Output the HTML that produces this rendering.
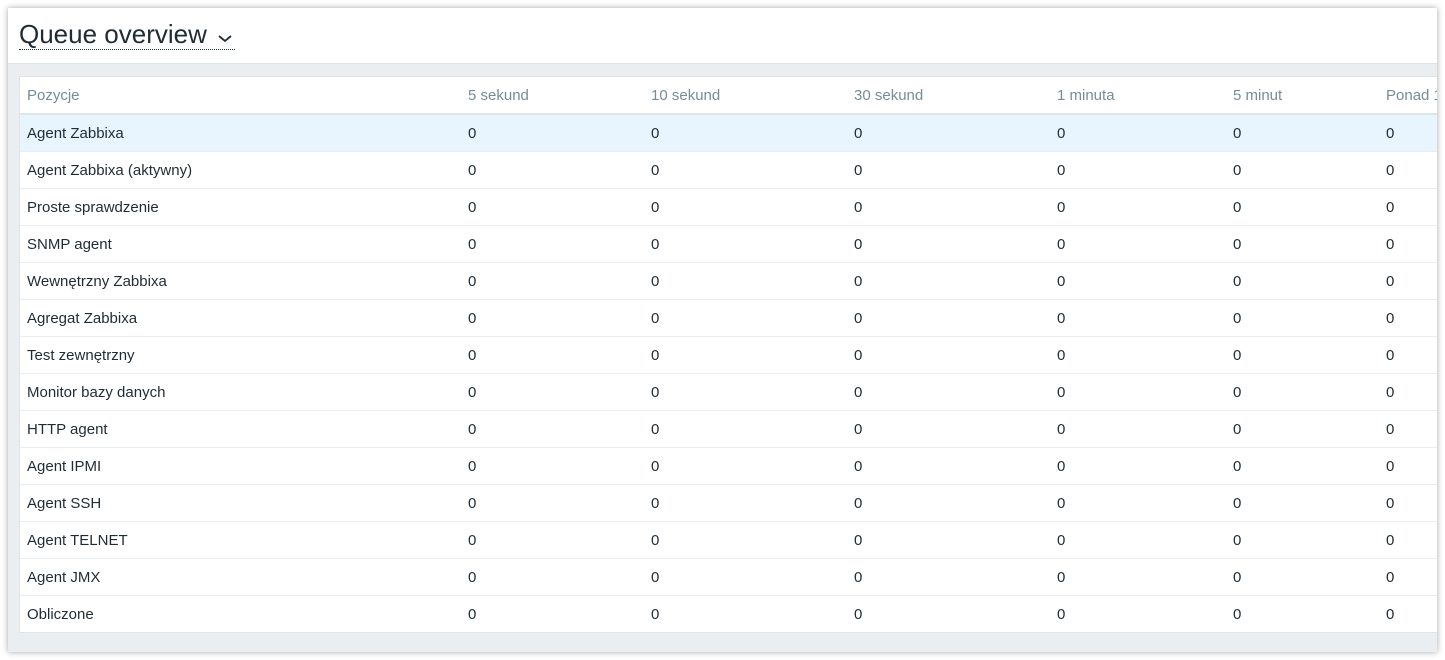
<!DOCTYPE html>
<html><head><style>
body{margin:0;width:1445px;height:660px;background:#fff;overflow:hidden;font-family:"Liberation Sans",Arial,sans-serif;position:relative}
.win{position:absolute;left:8px;top:8px;width:1429px;height:644px;background:#ebeef0;box-shadow:0 0 6px rgba(0,0,0,.35);overflow:hidden}
.hdr{position:absolute;left:0;top:0;width:1429px;height:55px;background:#fff;border-bottom:1px solid #dfe4e7}
.title{position:absolute;left:11px;top:12px;font-size:26px;color:#1f2c33;border-bottom:1px dotted #1f2c33;line-height:29px;padding-right:2px;white-space:nowrap}
.tbl{position:absolute;left:11px;top:68px;width:1440px;background:#fff;border:1px solid #dfe4e7;border-right:none}
.row{position:relative;height:36px;border-bottom:1px solid #ebeef0;font-size:15px;color:#1f2c33;white-space:nowrap}
.row span{position:absolute;top:10px}
.head{height:36px;border-bottom:2px solid #dfe4e7;color:#768d99}
.hl{background:#e8f5ff}
.row:last-child{border-bottom:none}
</style></head><body>
<div class="win">
<div class="hdr"><div class="title">Queue overview <svg width="16" height="10" viewBox="0 0 16 10" style="margin-left:3px"><path d="M2 3l6 5 6-5" stroke="#1f2c33" stroke-width="1.8" fill="none"/></svg></div></div>
<div class="tbl" id="t"></div>
</div>
<script>
var cols=[7,448,631,834,1037,1213,1366];
var names=["Agent Zabbixa","Agent Zabbixa (aktywny)","Proste sprawdzenie","SNMP agent","Wewnętrzny Zabbixa","Agregat Zabbixa","Test zewnętrzny","Monitor bazy danych","HTTP agent","Agent IPMI","Agent SSH","Agent TELNET","Agent JMX","Obliczone"];
var h=["Pozycje","5 sekund","10 sekund","30 sekund","1 minuta","5 minut","Ponad 10 minut"];
var s='<div class="row head">'+h.map((x,i)=>'<span style="left:'+cols[i]+'px">'+x+'</span>').join('')+'</div>';
names.forEach((n,r)=>{s+='<div class="row'+(r==0?' hl':'')+'">';cols.forEach((c,i)=>{s+='<span style="left:'+c+'px">'+(i?'0':n)+'</span>'});s+='</div>'});
document.getElementById('t').innerHTML=s;
</script>
</body></html>
